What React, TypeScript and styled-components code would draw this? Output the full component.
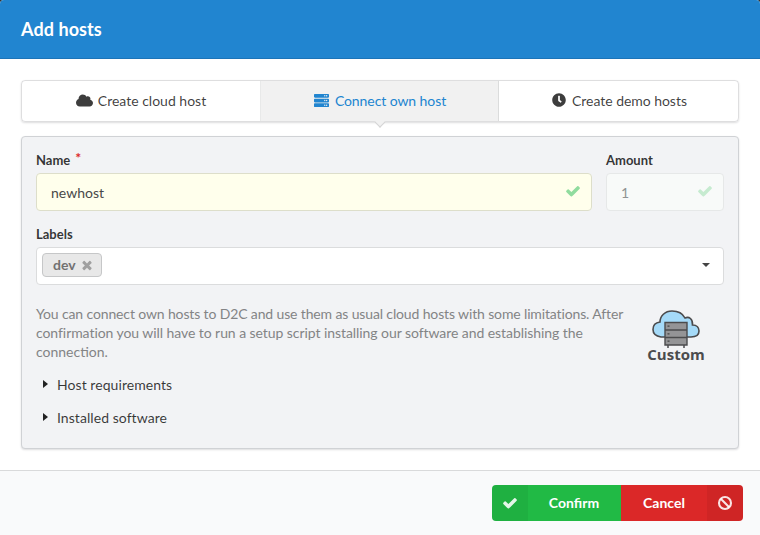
import React from "react";
import styled, { createGlobalStyle } from "styled-components";
import { FaCloud, FaServer, FaClock, FaBan } from "react-icons/fa";

const GlobalStyle = createGlobalStyle`
  *, *::before, *::after { box-sizing: border-box; }
  body { margin: 0; background: #333; font-family: Lato, "Liberation Sans", sans-serif; font-size: 14px; color: rgba(0,0,0,.87); overflow: hidden; }
`;

const Modal = styled.div`
  display: flex;
  flex-direction: column;
  height: 535px;
  background: #fff;
  border-radius: 4px 4px 0 0;
  overflow: hidden;
`;

const Header = styled.header`
  height: 59px;
  padding: 0 21px;
  background: #2185d0;
  border-bottom: 1px solid #1c74b8;
  color: #fff;
  font-size: 18px;
  font-weight: 700;
  line-height: 59px;
  letter-spacing: 0.08px;
`;

const Content = styled.main`
  flex: 1;
  padding: 21px 21px 0;
`;

const Tabs = styled.nav`
  display: grid;
  grid-template-columns: 239px 238px 1fr;
  height: 42px;
  border: 1px solid rgba(34,36,38,.15);
  border-radius: 4px;
  box-shadow: 0 1px 2px 0 rgba(34,36,38,.15);
`;

const Tab = styled.div<{ $active?: boolean }>`
  position: relative;
  display: flex;
  align-items: center;
  justify-content: center;
  gap: 5px;
  padding-bottom: 2px;
  border-right: 1px solid rgba(34,36,38,.1);
  background: ${p => (p.$active ? "#f1f1f1" : "transparent")};
  color: ${p => (p.$active ? "#2185d0" : "rgba(0,0,0,.76)")};
  letter-spacing: ${p => (p.$active ? "-0.08px" : "0")};
  &:last-child { border-right: 0; letter-spacing: -0.04px; }
`;

const TabIcon = styled.span<{ $size: number }>`
  display: flex;
  justify-content: center;
  width: 17px;
  svg { font-size: ${p => p.$size}px; }
`;

const TabPointer = styled.i`
  position: absolute;
  left: 50%;
  bottom: -5px;
  width: 8px;
  height: 8px;
  background: #f1f1f1;
  border: solid #d4d4d5;
  border-width: 0 1px 1px 0;
  transform: translateX(-50%) rotate(45deg);
`;

const Segment = styled.section`
  height: 313px;
  margin-top: 14px;
  padding: 14px;
  background: #f2f3f5;
  border: 1px solid #d0d2d5;
  border-radius: 4px;
  box-shadow: 0 1px 2px 0 rgba(34,36,38,.15);
`;

const Fields = styled.div`
  display: grid;
  grid-template-columns: 556px 118px;
  gap: 14px;
  margin-bottom: 14px;
`;

const Label = styled.label`
  display: block;
  height: 22px;
  font-size: 13px;
  font-weight: 700;
  line-height: 18px;
  color: rgba(0,0,0,.8);
`;

const Required = styled.span`
  margin-left: 5px;
  color: #db2828;
  font-size: 14px;
  line-height: 1;
  position: relative;
  top: -2px;
`;

const InputBox = styled.div<{ $disabled?: boolean }>`
  display: flex;
  align-items: center;
  justify-content: space-between;
  height: 38px;
  padding: 1px 10px 0 14px;
  background: ${p => (p.$disabled ? "#f8faf9" : "#ffffec")};
  border: 1px solid ${p => (p.$disabled ? "#e6e8e8" : "#dddeca")};
  border-radius: 4px;
  color: ${p => (p.$disabled ? "#909393" : "#484848")};
  svg { margin-top: -3px; font-size: 16px; color: ${p => (p.$disabled ? "#c6ebd0" : "#90dc9e")}; }
`;

const Dropdown = styled.div`
  display: flex;
  align-items: center;
  justify-content: space-between;
  height: 38px;
  padding: 0 13px 2px 5px;
  background: #fff;
  border: 1px solid #dbdcdd;
  border-radius: 4px;
`;

const Chip = styled.span`
  display: flex;
  align-items: center;
  gap: 4px;
  width: 60px;
  height: 24px;
  padding: 0 0 1px 10px;
  background: #e8e8e8;
  border: 1px solid #c6c7c8;
  border-radius: 4px;
  color: #727272;
  font-weight: 700;
  svg { font-size: 14px; color: #a0a0a0; }
`;

const Caret = styled.i<{ $right?: boolean }>`
  border: solid transparent;
  border-width: ${p => (p.$right ? "4px 0 4px 5px" : "4px 4px 0 4px")};
  ${p => (p.$right ? "border-left-color: #222" : "border-top-color: #444")};
`;

const Info = styled.div`
  display: flex;
  justify-content: space-between;
  height: 57px;
  margin-top: 19px;
`;

const Description = styled.p`
  width: 600px;
  margin: 0;
  color: #838485;
  line-height: 19px;
`;

const Line = styled.span<{ $spacing: number }>`
  display: block;
  white-space: nowrap;
  letter-spacing: ${p => p.$spacing}px;
`;

const Custom = styled.div`
  display: flex;
  flex-direction: column;
  align-items: center;
  width: 60px;
  margin: 5px 18px 0 0;
  color: #4b4b4d;
  font: 700 15px/10px "Open Sans", sans-serif;
`;

const AccordionTitle = styled.div`
  display: flex;
  align-items: center;
  gap: 9px;
  height: 19px;
  margin: 14px 0 0 7px;
  color: rgba(0,0,0,.78);
  letter-spacing: 0.06px;
  i { margin-top: -2px; }
`;

const Footer = styled.footer`
  display: flex;
  justify-content: flex-end;
  height: 65px;
  padding: 14px 17px;
  background: #f9fafb;
  border-top: 1px solid #d9dadb;
`;

const Button = styled.button<{ $tone: "green" | "red" }>`
  display: grid;
  grid-template-columns: ${p => (p.$tone === "green" ? "36px 92px" : "86px 36px")};
  width: ${p => (p.$tone === "green" ? "129px" : "122px")};
  height: 36px;
  padding: 0;
  overflow: hidden;
  border: 0;
  border-radius: ${p => (p.$tone === "green" ? "4px 0 0 4px" : "0 4px 4px 0")};
  background: ${p => (p.$tone === "green" ? "#21ba45" : "#db2828")};
  color: #fff;
  font: 700 14px/36px Lato, sans-serif;
`;

const ButtonIcon = styled.span`
  display: flex;
  align-items: center;
  justify-content: center;
  height: 36px;
  padding-right: 1px;
  background: rgba(0,0,0,.05);
  color: rgba(255,255,255,.88);
  svg { font-size: 16px; }
`;

const Check = () => (
  <svg width="1em" height="1em" viewBox="0 0 1792 1792" fill="currentColor">
    <path d="M1671 566q0 40-28 68l-724 724-136 136q-28 28-68 28t-68-28l-136-136-362-362q-28-28-28-68t28-68l136-136q28-28 68-28t68 28l294 295 656-657q28-28 68-28t68 28l136 136q28 28 28 68z" />
  </svg>
);

const Times = () => (
  <svg width="1em" height="1em" viewBox="0 0 1792 1792" fill="currentColor">
    <path d="M1490 1322q0 40-28 68l-136 136q-28 28-68 28t-68-28l-294-294-294 294q-28 28-68 28t-68-28l-136-136q-28-28-28-68t28-68l294-294-294-294q-28-28-28-68t28-68l136-136q28-28 68-28t68 28l294 294 294-294q28-28 68-28t68 28l136 136q28 28 28 68t-28 68l-294 294 294 294q28 28 28 68z" />
  </svg>
);

const Ban = () => (
  <svg width="1em" height="1em" viewBox="0 0 16 16" fill="none" stroke="currentColor" strokeWidth="2.1">
    <circle cx="8" cy="8" r="6" />
    <path d="M3.800 3.800L12.200 12.200" />
  </svg>
);

const CloudServer = () => (
  <svg width="50" height="40" viewBox="0 0 50 40">
    <path d="M10 28C4 27 2 24 2 20.500C2 16 5 13.500 9 13C9 7 14 2 21 2C27 2 32 5 34 9C38 7 42 10 41.500 16C46 16 48 19 48 22C48 26 45 28 40 28Z" fill="#a5daf8" stroke="#4b4b4d" strokeWidth="1.600" />
    <path d="M17 36v3M33 36v3" stroke="#4b4b4d" strokeWidth="1.500" />
    <path d="M14 13.500h22v22.500h-22zM14 21h22M14 28.500h22" fill="#949496" stroke="#4b4b4d" strokeWidth="1.400" />
    <path d="M16.500 17.200h2M16.500 24.800h2M16.500 32.200h2" stroke="#444" strokeWidth="1.300" />
  </svg>
);

export default function App() {
  return (
    <>
      <GlobalStyle />
      <Modal>
        <Header>Add hosts</Header>
        <Content>
          <Tabs>
            <Tab><TabIcon $size={17}><FaCloud /></TabIcon>Create cloud host</Tab>
            <Tab $active><TabIcon $size={15}><FaServer /></TabIcon>Connect own host<TabPointer /></Tab>
            <Tab><TabIcon $size={14}><FaClock /></TabIcon>Create demo hosts</Tab>
          </Tabs>
          <Segment>
            <Fields>
              <div>
                <Label>Name<Required>*</Required></Label>
                <InputBox>newhost<Check /></InputBox>
              </div>
              <div>
                <Label>Amount</Label>
                <InputBox $disabled>1<Check /></InputBox>
              </div>
            </Fields>
            <Label>Labels</Label>
            <Dropdown><Chip>dev<Times /></Chip><Caret /></Dropdown>
            <Info>
              <Description>
                <Line $spacing={-0.135}>You can connect own hosts to D2C and use them as usual cloud hosts with some limitations. After</Line>
                <Line $spacing={-0.065}>confirmation you will have to run a setup script installing our software and establishing the</Line>
                <Line $spacing={0}>connection.</Line>
              </Description>
              <Custom><CloudServer />Custom</Custom>
            </Info>
            <AccordionTitle><Caret $right />Host requirements</AccordionTitle>
            <AccordionTitle><Caret $right />Installed software</AccordionTitle>
          </Segment>
        </Content>
        <Footer>
          <Button $tone="green"><ButtonIcon><Check /></ButtonIcon>Confirm</Button>
          <Button $tone="red">Cancel<ButtonIcon><Ban /></ButtonIcon></Button>
        </Footer>
      </Modal>
    </>
  );
}
